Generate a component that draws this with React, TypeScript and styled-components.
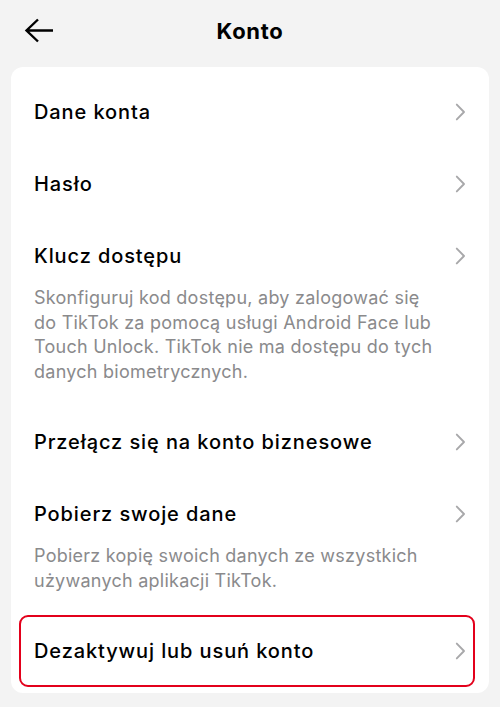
import React from "react";
import styled, { createGlobalStyle } from "styled-components";

const GlobalStyle = createGlobalStyle`
  html, body {
    margin: 0;
    padding: 0;
    background: #f3f3f3;
  }
  body {
    font-family: Inter, "Noto Sans", "Liberation Sans", sans-serif;
    color: #161823;
  }
`;

const Page = styled.div`
  width: 500px;
  min-height: 707px;
  background: #f3f3f3;
  box-sizing: border-box;
  padding: 0 11px;
`;

const Header = styled.header`
  height: 67px;
  display: grid;
  grid-template-columns: 48px 1fr 48px;
  align-items: center;
`;

const BackButton = styled.button`
  border: none;
  background: none;
  padding: 0 0 6px 13px;
  width: 48px;
  height: 48px;
  display: flex;
  align-items: center;
  cursor: pointer;
`;

const Title = styled.h1`
  margin: 0 0 6px;
  text-align: center;
  font-size: 22px;
  font-weight: 700;
  color: #000;
  letter-spacing: 0.7px;
`;

const Card = styled.div`
  background: #fff;
  border-radius: 12px;
  padding: 9px 0 6px;
`;

const Row = styled.div<{ $highlight?: boolean; $tall?: boolean }>`
  position: relative;
  padding: 22px 23px ${(p) => (p.$tall ? "22px" : "23px")};
  cursor: pointer;

  &::after {
    content: "";
    display: ${(p) => (p.$highlight ? "block" : "none")};
    position: absolute;
    left: 8px;
    right: 14px;
    top: 0;
    bottom: 0;
    border: 2px solid #e3001b;
    border-radius: 9px;
    pointer-events: none;
  }
`;

const RowHead = styled.div`
  display: flex;
  align-items: center;
  justify-content: space-between;
  height: 27px;
`;

const Label = styled.span`
  font-size: 20px;
  font-weight: 500;
  color: #000;
  letter-spacing: 0.9px;
`;

const Description = styled.p`
  margin: 17px 20px 0 0;
  font-size: 18px;
  line-height: 24.5px;
  color: #8a8a8c;
  letter-spacing: 0.25px;
`;

const Chevron = () => (
  <svg width="11" height="18" viewBox="0 0 11 18" fill="none">
    <path
      d="M1.8 1.6 L9 9 L1.8 16.4"
      stroke="#a8a8aa"
      strokeWidth="1.9"
      strokeLinecap="round"
      strokeLinejoin="round"
    />
  </svg>
);

const BackArrow = () => (
  <svg width="30" height="26" viewBox="0 0 30 26" fill="none">
    <path
      d="M29 12.5 H2.5 M14 1.5 L2.5 12.5 L14 23.5"
      stroke="#000"
      strokeWidth="2.4"
    />
  </svg>
);

interface Item {
  label: string;
  description?: string;
  highlight?: boolean;
}

const items: Item[] = [
  { label: "Dane konta" },
  { label: "Hasło" },
  {
    label: "Klucz dostępu",
    description:
      "Skonfiguruj kod dostępu, aby zalogować się do TikTok za pomocą usługi Android Face lub Touch Unlock. TikTok nie ma dostępu do tych danych biometrycznych.",
  },
  { label: "Przełącz się na konto biznesowe" },
  {
    label: "Pobierz swoje dane",
    description:
      "Pobierz kopię swoich danych ze wszystkich używanych aplikacji TikTok.",
  },
  { label: "Dezaktywuj lub usuń konto", highlight: true },
];

export default function App() {
  return (
    <Page>
      <GlobalStyle />
      <Header>
        <BackButton aria-label="Wstecz">
          <BackArrow />
        </BackButton>
        <Title>Konto</Title>
        <span />
      </Header>
      <Card>
        {items.map((item) => (
          <Row
            key={item.label}
            $highlight={item.highlight}
            $tall={!!item.description}
          >
            <RowHead>
              <Label>{item.label}</Label>
              <Chevron />
            </RowHead>
            {item.description && <Description>{item.description}</Description>}
          </Row>
        ))}
      </Card>
    </Page>
  );
}
